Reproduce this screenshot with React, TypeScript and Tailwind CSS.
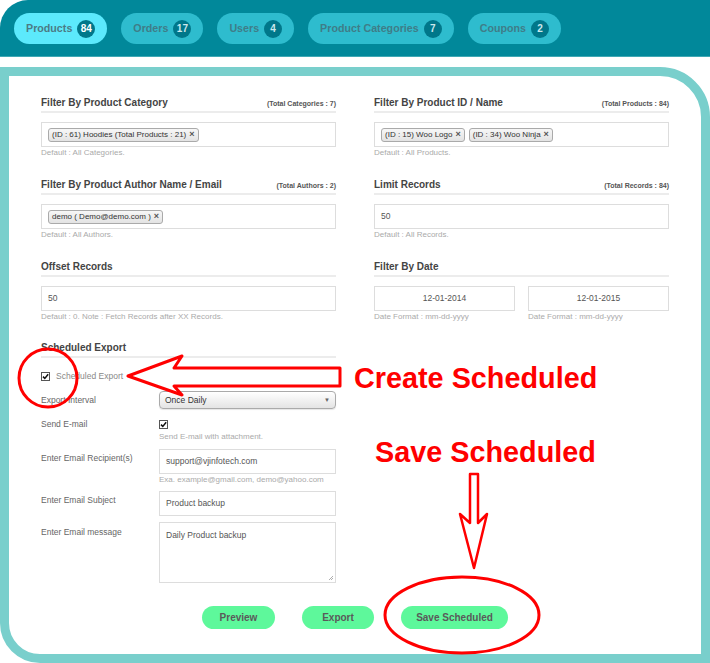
import React from 'react';

const tabs = [
  { label: 'Products', count: 84, active: true },
  { label: 'Orders', count: 17 },
  { label: 'Users', count: 4 },
  { label: 'Product Categories', count: 7 },
  { label: 'Coupons', count: 2 },
];

const Chip = ({ text }: { text: string }) => (
  <span className="inline-flex h-[14px] items-center gap-[3px] rounded-[3px] border border-[#aaa] bg-gradient-to-b from-[#f7f7f7] to-[#e3e3e3] px-[3px] text-[8px] leading-none text-[#333]">
    {text}
    <span className="text-[9px] font-bold text-[#555]">×</span>
  </span>
);

const Heading = ({ title, note }: { title: string; note?: string }) => (
  <div className="flex items-end justify-between border-b-2 border-[#ececec] pb-px">
    <span className="text-[10px] font-bold leading-[14px] text-[#444]">{title}</span>
    {note && <span className="text-[7px] font-bold leading-[12px] text-[#555]">{note}</span>}
  </div>
);

const Help = ({ children }: { children: React.ReactNode }) => (
  <p className="text-[8px] leading-[11px] text-[#aaa]">{children}</p>
);

const Box = ({ children, center }: { children?: React.ReactNode; center?: boolean }) => (
  <div
    className={
      'mt-[9px] flex h-[25px] items-center gap-[4px] border border-[#ddd] px-[6px] text-[8.5px] text-[#555] ' +
      (center ? 'justify-center' : '')
    }
  >
    {children}
  </div>
);

const Check = () => (
  <span className="flex h-[9px] w-[9px] shrink-0 items-center justify-center border border-[#555] bg-white">
    <svg width="7" height="7" viewBox="0 0 7 7">
      <path d="M1 3.6 L2.8 5.4 L6.2 1.2" stroke="#111" strokeWidth="1.5" fill="none" />
    </svg>
  </span>
);

const Label = ({ children, pt = 'pt-[2px]' }: { children: React.ReactNode; pt?: string }) => (
  <span className={'text-[8.5px] leading-[14px] text-[#666] ' + pt}>{children}</span>
);

export default function App() {
  return (
    <div className="relative h-[663px] w-[710px] overflow-hidden bg-white font-['Liberation_Sans',Arial,sans-serif]">
      {/* tab bar */}
      <div className="flex h-[57px] gap-[14px] rounded-tl-[28px] border-b border-[#3fa8b4] bg-[#01889a] pl-[14px] pt-[13px]">
        {tabs.map((t) => (
          <div
            key={t.label}
            className={
              'flex h-[31px] items-center gap-[5px] rounded-full px-[12px] text-[10.7px] font-bold ' +
              (t.active ? 'bg-[#5ce9fc] text-[#4b7b85]' : 'bg-[#2ebcce] text-[#3f7d88]')
            }
          >
            {t.label}
            <span
              className={
                'flex h-[18px] w-[18px] items-center justify-center rounded-full bg-[#00778a] text-[10px] font-bold ' +
                (t.active ? 'text-white' : 'text-[#cde8ec]')
              }
            >
              {t.count}
            </span>
          </div>
        ))}
      </div>

      {/* panel */}
      <div className="mt-[10px] h-[596px] rounded-tr-[50px] rounded-bl-[40px] border-[9px] border-[#79cfcc] px-[32px] pt-[20px]">
        <div className="grid grid-cols-2 gap-x-[38px] gap-y-[20px]">
          <div>
            <Heading title="Filter By Product Category" note="(Total Categories : 7)" />
            <Box>
              <Chip text="(ID : 61) Hoodies (Total Products : 21)" />
            </Box>
            <Help>Default : All Categories.</Help>
          </div>
          <div>
            <Heading title="Filter By Product ID / Name" note="(Total Products : 84)" />
            <Box>
              <Chip text="(ID : 15) Woo Logo" />
              <Chip text="(ID : 34) Woo Ninja" />
            </Box>
            <Help>Default : All Products.</Help>
          </div>
          <div>
            <Heading title="Filter By Product Author Name / Email" note="(Total Authors : 2)" />
            <Box>
              <Chip text="demo ( Demo@demo.com )" />
            </Box>
            <Help>Default : All Authors.</Help>
          </div>
          <div>
            <Heading title="Limit Records" note="(Total Records : 84)" />
            <Box>50</Box>
            <Help>Default : All Records.</Help>
          </div>
          <div>
            <Heading title="Offset Records" />
            <Box>50</Box>
            <Help>Default : 0. Note : Fetch Records after XX Records.</Help>
          </div>
          <div>
            <Heading title="Filter By Date" />
            <div className="grid grid-cols-2 gap-x-[13px]">
              <div>
                <Box center>12-01-2014</Box>
                <Help>Date Format : mm-dd-yyyy</Help>
              </div>
              <div>
                <Box center>12-01-2015</Box>
                <Help>Date Format : mm-dd-yyyy</Help>
              </div>
            </div>
          </div>
        </div>

        {/* scheduled export */}
        <div className="mt-[19px] w-[295px]">
          <Heading title="Scheduled Export" />
          <div className="mt-[11px] flex items-center gap-[6px]">
            <Check />
            <span className="text-[8.5px] leading-[14px] text-[#888]">Scheduled Export</span>
          </div>

          <div className="mt-[8px] grid grid-cols-[118px_177px]">
            <Label>Export Interval</Label>
            <div className="flex h-[18px] items-center justify-between rounded-[4px] border border-[#aaa] bg-gradient-to-b from-white to-[#e4e4e4] px-[5px] text-[8.5px] text-[#333] shadow-[0_1px_1px_rgba(0,0,0,0.1)]">
              Once Daily
              <span className="text-[6px] text-[#666]">▼</span>
            </div>
          </div>

          <div className="mt-[8px] grid grid-cols-[118px_177px]">
            <Label pt="pt-0">Send E-mail</Label>
            <div>
              <div className="mt-[3px]">
                <Check />
              </div>
              <p className="mt-[2px] text-[8px] leading-[12px] text-[#aaa]">Send E-mail with attachment.</p>
            </div>
          </div>

          <div className="mt-[6px] grid grid-cols-[118px_177px]">
            <Label>Enter Email Recipient(s)</Label>
            <div>
              <div className="flex h-[25px] items-center border border-[#ddd] px-[6px] text-[8.5px] text-[#555]">
                support@vjinfotech.com
              </div>
              <p className="text-[8px] leading-[11px] text-[#aaa]">Exa. example@gmail.com, demo@yahoo.com</p>
            </div>
          </div>

          <div className="mt-[6px] grid grid-cols-[118px_177px]">
            <Label>Enter Email Subject</Label>
            <div className="flex h-[25px] items-center border border-[#ddd] px-[6px] text-[8.5px] text-[#555]">
              Product backup
            </div>
          </div>

          <div className="mt-[6px] grid grid-cols-[118px_177px]">
            <Label pt="pt-[3px]">Enter Email message</Label>
            <div className="relative h-[61px] border border-[#ddd] px-[6px] pt-[6px] text-[8.5px] text-[#555]">
              Daily Product backup
              <svg className="absolute bottom-[1px] right-[1px]" width="6" height="6" viewBox="0 0 6 6">
                <path d="M5 1 L1 5 M5 3 L3 5" stroke="#999" strokeWidth="0.8" />
              </svg>
            </div>
          </div>
        </div>

        <div className="mt-[23px] flex justify-center gap-[27px] text-[10px] font-bold text-[#5a5a5a]">
          <div className="flex h-[23px] w-[73px] items-center justify-center rounded-full bg-[#5ef89b]">Preview</div>
          <div className="flex h-[23px] w-[72px] items-center justify-center rounded-full bg-[#5ef89b]">Export</div>
          <div className="flex h-[23px] w-[107px] items-center justify-center rounded-full bg-[#5ef89b]">Save Scheduled</div>
        </div>
      </div>

      {/* annotations */}
      <svg className="pointer-events-none absolute left-0 top-0" width="710" height="663" viewBox="0 0 710 663">
        <circle cx="48" cy="378" r="29" fill="none" stroke="#f00" strokeWidth="3" />
        <polygon
          points="128,376 182,356 174,368 340,368 340,386 174,386 182,395"
          fill="#fff"
          stroke="#f00"
          strokeWidth="3"
          strokeLinejoin="round"
        />
        <polygon
          points="470,474 478,474 478,523 487,514 474,568 460,514 470,523"
          fill="#fff"
          stroke="#f00"
          strokeWidth="2.5"
          strokeLinejoin="round"
        />
        <ellipse cx="462" cy="615" rx="77" ry="38" fill="none" stroke="#f00" strokeWidth="3" />
      </svg>
      <div className="absolute left-[354px] top-[364px] text-[28.8px] font-bold leading-[28px] text-[#f00]">
        Create Scheduled
      </div>
      <div className="absolute left-[375px] top-[438px] text-[28.8px] font-bold leading-[28px] text-[#f00]">
        Save Scheduled
      </div>
    </div>
  );
}
